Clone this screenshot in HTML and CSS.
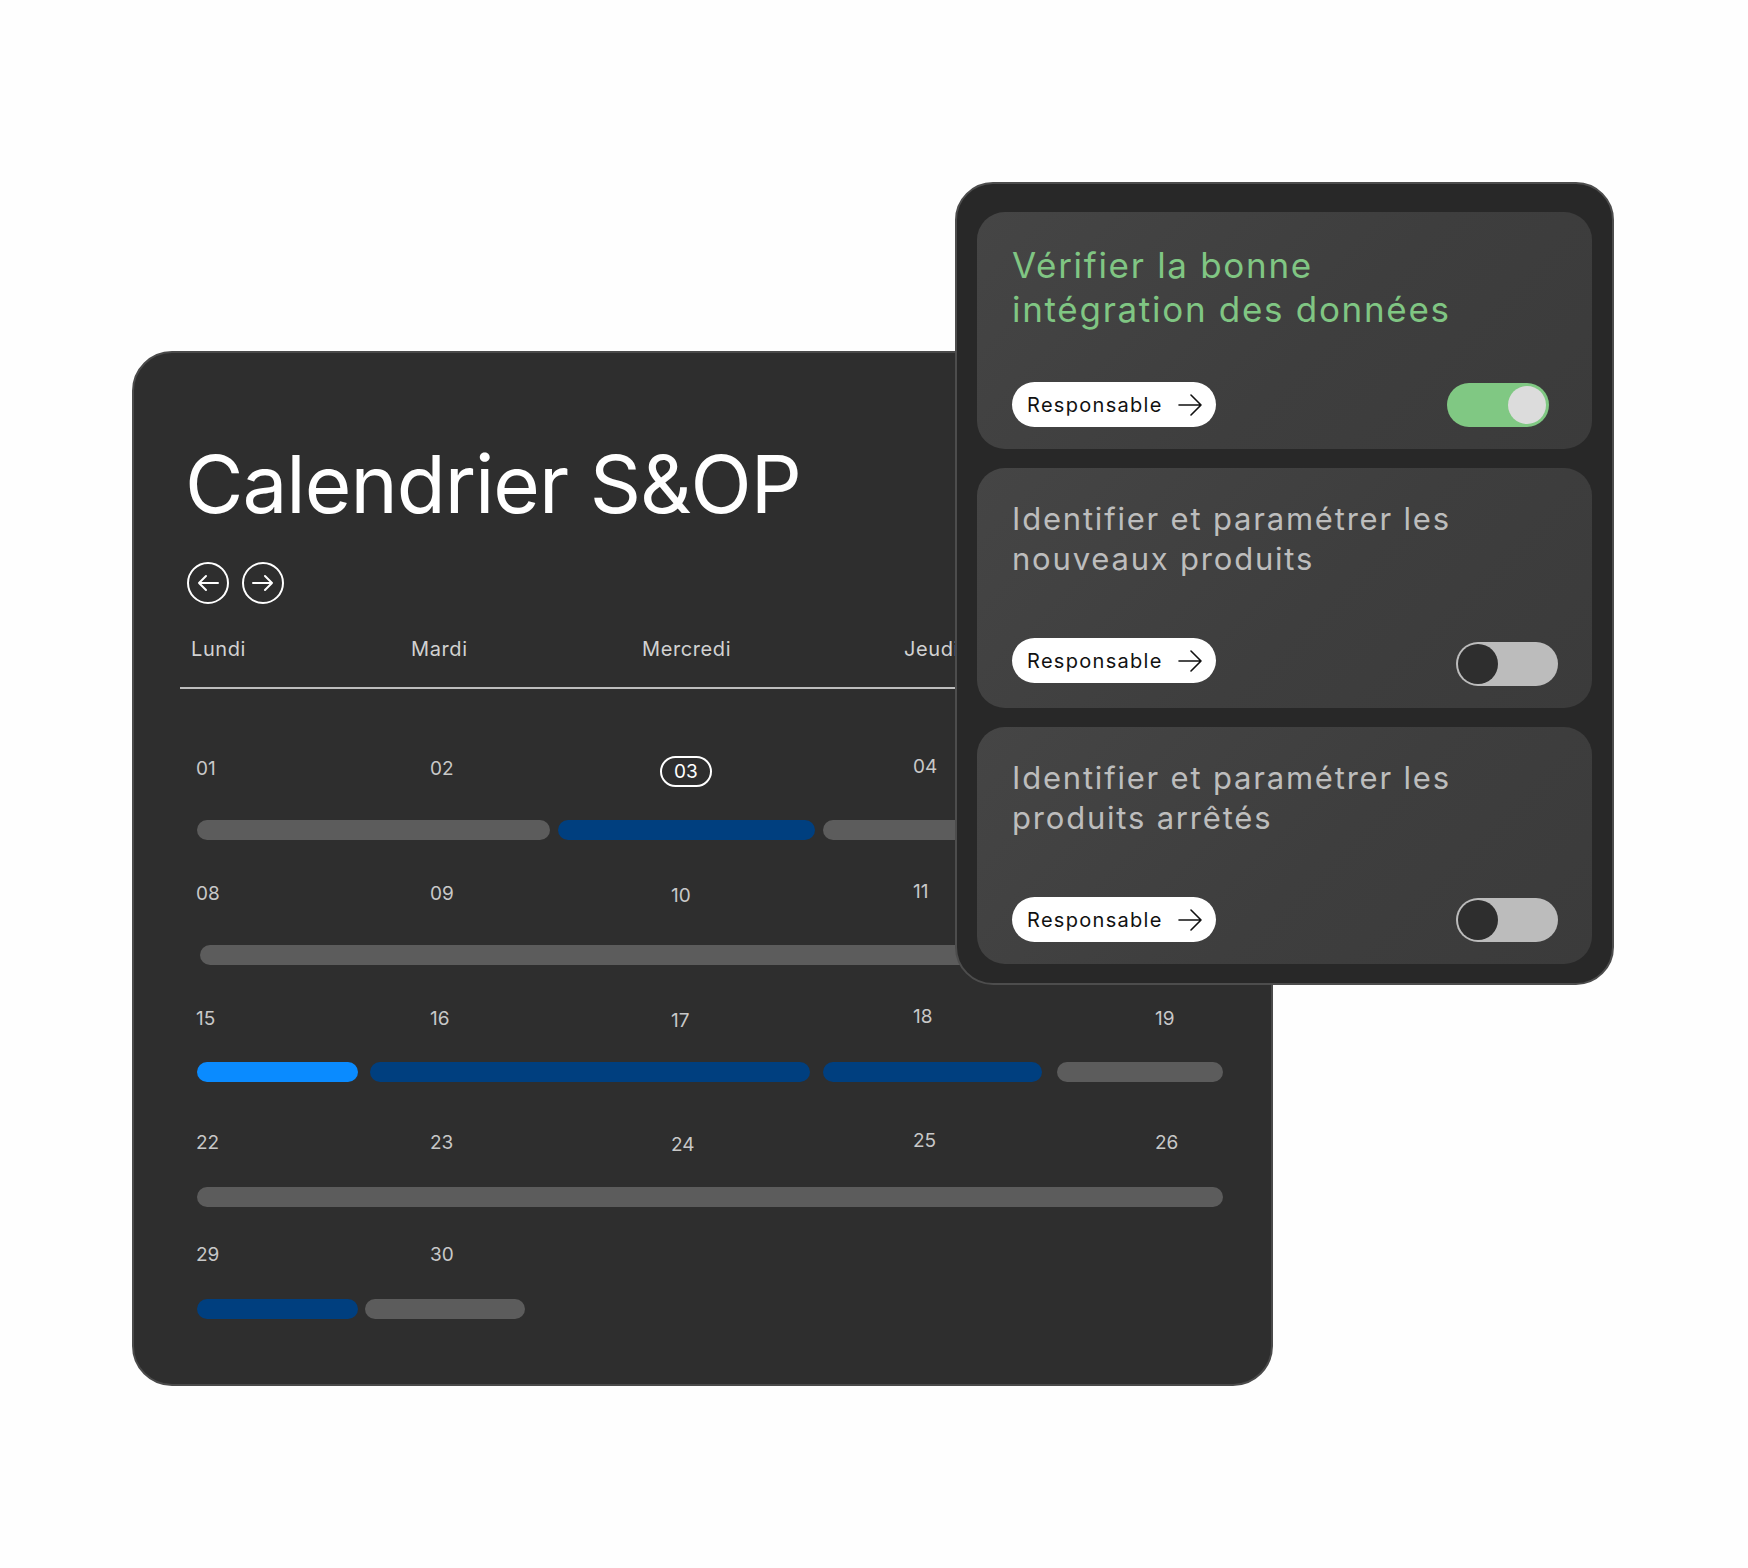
FILE: index.html
```html
<!DOCTYPE html>
<html lang="fr">
<head>
<meta charset="utf-8">
<title>Calendrier S&amp;OP</title>
<link rel="stylesheet" href="styles.css">
</head>
<body>
<div class="stage">
  <section class="calendar">
    <h1 class="cal-title">Calendrier S&amp;OP</h1>
    <div class="cal-nav">
      <span class="nav-btn">
        <svg width="42" height="42" viewBox="0 0 42 42"><circle cx="21" cy="21" r="20" fill="none" stroke="#fff" stroke-width="2"/><path d="M31 21H12M19 14L12 21L19 28" fill="none" stroke="#fff" stroke-width="2" stroke-linecap="round" stroke-linejoin="round"/></svg>
      </span>
      <span class="nav-btn">
        <svg width="42" height="42" viewBox="0 0 42 42"><circle cx="21" cy="21" r="20" fill="none" stroke="#fff" stroke-width="2"/><path d="M11 21H30M23 14L30 21L23 28" fill="none" stroke="#fff" stroke-width="2" stroke-linecap="round" stroke-linejoin="round"/></svg>
      </span>
    </div>
    <div class="weekdays">
      <span>Lundi</span><span>Mardi</span><span>Mercredi</span><span>Jeudi</span>
    </div>
    <div class="weeks">
      <div class="week w1">
        <div class="days"><span class="day">01</span><span class="day">02</span><span class="day"><span class="today">03</span></span><span class="day">04</span><span class="day">05</span></div>
        <div class="bars">
          <span class="bar gray" style="width:353px"></span>
          <span class="bar navy" style="width:257px;margin-left:8px"></span>
          <span class="bar gray" style="width:400px;margin-left:8px"></span>
        </div>
      </div>
      <div class="week w2">
        <div class="days"><span class="day">08</span><span class="day">09</span><span class="day">10</span><span class="day">11</span><span class="day">12</span></div>
        <div class="bars">
          <span class="bar gray" style="width:1023px;margin-left:3px"></span>
        </div>
      </div>
      <div class="week w3">
        <div class="days"><span class="day">15</span><span class="day">16</span><span class="day">17</span><span class="day">18</span><span class="day">19</span></div>
        <div class="bars">
          <span class="bar sky" style="width:161px"></span>
          <span class="bar navy" style="width:440px;margin-left:12px"></span>
          <span class="bar navy" style="width:219px;margin-left:13px"></span>
          <span class="bar gray" style="width:166px;margin-left:15px"></span>
        </div>
      </div>
      <div class="week w4">
        <div class="days"><span class="day">22</span><span class="day">23</span><span class="day">24</span><span class="day">25</span><span class="day">26</span></div>
        <div class="bars">
          <span class="bar gray" style="width:1026px"></span>
        </div>
      </div>
      <div class="week w5">
        <div class="days"><span class="day">29</span><span class="day">30</span></div>
        <div class="bars">
          <span class="bar navy" style="width:161px"></span>
          <span class="bar gray" style="width:160px;margin-left:7px"></span>
        </div>
      </div>
    </div>
  </section>

  <aside class="tasks">
    <div class="task done">
      <h2 class="task-title">Vérifier la bonne<br>intégration des données</h2>
      <div class="task-foot">
        <span class="pill">Responsable
          <svg width="24" height="24" viewBox="0 0 24 24"><path d="M1 12H23M13 2L23 12L13 22" fill="none" stroke="#111" stroke-width="1.6" stroke-linecap="round" stroke-linejoin="round"/></svg>
        </span>
        <span class="toggle on"></span>
      </div>
    </div>
    <div class="task raised">
      <h2 class="task-title">Identifier et paramétrer les<br>nouveaux produits</h2>
      <div class="task-foot">
        <span class="pill">Responsable
          <svg width="24" height="24" viewBox="0 0 24 24"><path d="M1 12H23M13 2L23 12L13 22" fill="none" stroke="#111" stroke-width="1.6" stroke-linecap="round" stroke-linejoin="round"/></svg>
        </span>
        <span class="toggle"></span>
      </div>
    </div>
    <div class="task">
      <h2 class="task-title">Identifier et paramétrer les<br>produits arrêtés</h2>
      <div class="task-foot">
        <span class="pill">Responsable
          <svg width="24" height="24" viewBox="0 0 24 24"><path d="M1 12H23M13 2L23 12L13 22" fill="none" stroke="#111" stroke-width="1.6" stroke-linecap="round" stroke-linejoin="round"/></svg>
        </span>
        <span class="toggle"></span>
      </div>
    </div>
  </aside>
</div>
</body>
</html>
```

FILE: styles.css
```css
* { box-sizing: border-box; }

body {
  margin: 0;
  background: #fefefe;
  font-family: Inter, "Noto Sans", "DejaVu Sans", sans-serif;
}

.stage {
  position: relative;
  width: 1748px;
  height: 1568px;
  padding: 351px 0 0 132px;
  overflow: hidden;
}

/* ---------- Calendar card ---------- */
.calendar {
  width: 1141px;
  height: 1035px;
  background: #2e2e2e;
  border: 2px solid #4a4a4a;
  border-radius: 40px;
  padding: 91px 46px 0;
  color: #fff;
  overflow: hidden;
}

.cal-title {
  margin: 0 0 0 5px;
  font-size: 80px;
  line-height: 80px;
  font-weight: 400;
  letter-spacing: -1px;
  color: #fff;
}

.cal-nav {
  display: flex;
  gap: 13px;
  margin: 38px 0 0 7px;
}

.nav-btn {
  display: block;
  width: 42px;
  height: 42px;
}

.nav-btn svg { display: block; }

.weekdays {
  display: grid;
  grid-template-columns: 220px 231px 262px 1fr;
  margin-top: 33px;
  padding: 0 0 26px 11px;
  border-bottom: 2px solid #bdbdbd;
  font-size: 20px;
  line-height: 24px;
  letter-spacing: 0.6px;
  color: #d2d2d2;
  white-space: nowrap;
}

.weeks { padding-left: 16px; }

.days {
  display: grid;
  grid-template-columns: 234px 241px 242px 242px 1fr;
  height: 30px;
  font-size: 19px;
  line-height: 30px;
  color: #c8c8c8;
}

.day:nth-child(3) { transform: translateY(2px); }
.day:nth-child(4) { transform: translateY(-2px); }

.today {
  display: inline-block;
  vertical-align: top;
  margin-left: -11px;
  padding: 0 12px;
  height: 31px;
  line-height: 27px;
  border: 2px solid #fff;
  border-radius: 16px;
  color: #fff;
}

.bars {
  display: flex;
  height: 20px;
  padding-left: 1px;
}

.bar {
  display: block;
  height: 20px;
  border-radius: 10px;
  flex: none;
}

.bar.gray { background: #5c5c5c; }
.bar.navy { background: #003f7f; }
.bar.sky { background: #0a8bff; }

.w1 { padding-top: 65px; }
.w1 .bars { margin-top: 36px; }
.w2 { padding-top: 39px; }
.w2 .bars { margin-top: 36px; }
.w3 { padding-top: 39px; }
.w3 .bars { margin-top: 28px; }
.w4 { padding-top: 46px; }
.w4 .bars { margin-top: 29px; }
.w5 { padding-top: 33px; }
.w5 .bars { margin-top: 29px; }

/* ---------- Task panel ---------- */
.tasks {
  position: absolute;
  left: 955px;
  top: 182px;
  width: 659px;
  height: 803px;
  background: #282828;
  border: 2px solid #4d4d4d;
  border-radius: 38px;
  padding: 28px 20px 19px;
  display: flex;
  flex-direction: column;
  gap: 19px;
}

.task {
  flex: 1;
  border-radius: 28px;
  background: linear-gradient(135deg, #454545 0%, #3e3e3e 55%, #3b3b3b 100%);
  padding: 31px 34px 22px 35px;
  display: flex;
  flex-direction: column;
}

.task.raised { padding-bottom: 25px; }

.task-title {
  margin: 0;
  font-size: 31px;
  line-height: 40px;
  font-weight: 400;
  letter-spacing: 1.8px;
  color: #bdbdbd;
  white-space: nowrap;
}

.task.done .task-title {
  font-size: 35px;
  line-height: 44px;
  letter-spacing: 1.7px;
  color: #80c683;
}

.task-foot {
  margin-top: auto;
  display: flex;
  justify-content: space-between;
  align-items: center;
}

.pill {
  display: inline-flex;
  align-items: center;
  gap: 15px;
  height: 45px;
  padding: 0 14px 0 15px;
  background: #fff;
  border-radius: 23px;
  font-size: 20px;
  letter-spacing: 1.3px;
  color: #111;
}

.pill svg { display: block; }

.toggle {
  position: relative;
  display: block;
  width: 102px;
  height: 44px;
  border-radius: 22px;
  background: #bcbcbc;
}

.task.raised .toggle { margin-bottom: -6px; }

.toggle::after {
  content: "";
  position: absolute;
  top: 2px;
  left: 2px;
  width: 40px;
  height: 40px;
  border-radius: 50%;
  background: #2e2e2e;
}

.toggle.on {
  background: #80c883;
  margin-right: 9px;
}

.toggle.on::after {
  left: auto;
  right: 3px;
  top: 3px;
  width: 38px;
  height: 38px;
  background: #dcdcdc;
}
```
